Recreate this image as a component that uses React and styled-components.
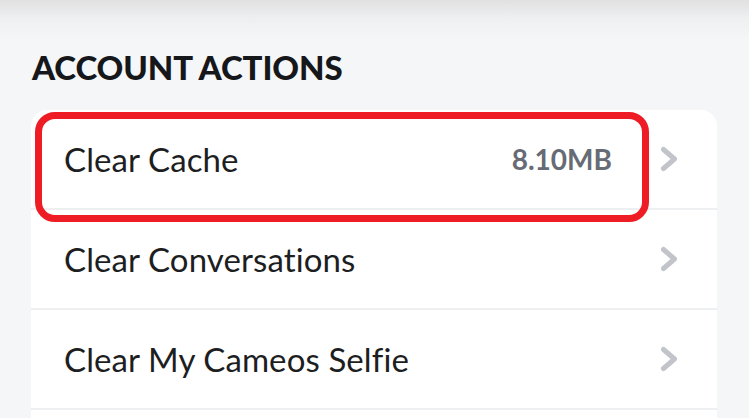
import React from 'react';
import styled, { createGlobalStyle } from 'styled-components';

const GlobalStyle = createGlobalStyle`
  html, body {
    margin: 0;
    padding: 0;
    background: #f5f6f8;
  }
  body {
    font-family: Lato, "Noto Sans", sans-serif;
    -webkit-font-smoothing: antialiased;
  }
`;

const Page = styled.div`
  width: 749px;
  height: 418px;
  overflow: hidden;
  background: linear-gradient(to bottom, #e1e1e2 0px, #eeeff0 18px, #f5f6f8 40px, #f5f6f8 100%);
  padding: 51px 32px 0 31px;
  box-sizing: border-box;
`;

const SectionTitle = styled.h2`
  margin: 0 0 26px 1px;
  font-size: 33px;
  font-weight: 900;
  line-height: 33px;
  color: #16171a;
  letter-spacing: -0.1px;
`;

const Card = styled.div`
  position: relative;
  background: #fff;
  border-radius: 16px 16px 0 0;
`;

const Row = styled.div`
  display: flex;
  align-items: center;
  height: 98px;
  padding: 0 36px 0 33px;
  border-bottom: 2px solid #eeeff1;
`;

const Label = styled.span`
  flex: 1;
  font-size: 33px;
  color: #1d1e21;
  letter-spacing: 0.1px;
`;

const Value = styled.span`
  font-size: 28px;
  font-weight: 700;
  color: #666b74;
  margin-right: 47px;
`;

const Chevron = styled.svg`
  width: 22px;
  height: 26px;
  flex-shrink: 0;
`;

const Highlight = styled.div`
  position: absolute;
  left: 4px;
  top: 2px;
  width: 614px;
  height: 110px;
  box-sizing: border-box;
  border: 7px solid #ee1c25;
  border-radius: 20px;
  pointer-events: none;
`;

const rows = [
  { label: 'Clear Cache', value: '8.10MB' },
  { label: 'Clear Conversations' },
  { label: 'Clear My Cameos Selfie' },
  { label: '' },
];

const Arrow = () => (
  <Chevron viewBox="0 0 22 26">
    <path d="M4.5 3.5 L15.5 13 L4.5 22.5" fill="none" stroke="#c1c4c9" strokeWidth="5" strokeLinecap="round" strokeLinejoin="round" />
  </Chevron>
);

export default function App() {
  return (
    <>
      <GlobalStyle />
      <Page>
        <SectionTitle>ACCOUNT ACTIONS</SectionTitle>
        <Card>
          {rows.map((r, i) => (
            <Row key={i}>
              <Label>{r.label}</Label>
              {r.value && <Value>{r.value}</Value>}
              <Arrow />
            </Row>
          ))}
          <Highlight />
        </Card>
      </Page>
    </>
  );
}
